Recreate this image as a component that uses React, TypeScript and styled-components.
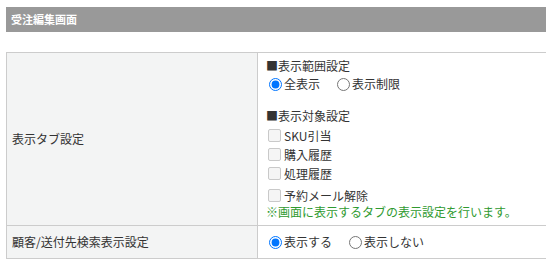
import styled, { createGlobalStyle } from "styled-components";

const GlobalStyle = createGlobalStyle`
  html, body {
    margin: 0;
    padding: 0;
    background: #fff;
    overflow: hidden;
  }
  body {
    font-family: "Noto Sans CJK JP", "Liberation Sans", sans-serif;
    color: #333;
  }
`;

const Page = styled.div`
  padding: 7px 0 0 6px;
`;

const TitleBar = styled.div`
  height: 25px;
  background: #999999;
  color: #fff;
  font-size: 11px;
  font-weight: bold;
  line-height: 25px;
  padding-left: 5px;
  margin-bottom: 20px;
`;

const Table = styled.table`
  border-collapse: collapse;
  width: 100%;
  font-size: 12px;
`;

const HeadCell = styled.th`
  width: 245px;
  background: #f3f4f4;
  border: 1px solid #cccccc;
  text-align: left;
  font-weight: normal;
  vertical-align: middle;
  padding: 0 0 0 5px;
  line-height: 18px;
`;

const DataCell = styled.td<{ $compact?: boolean }>`
  border: 1px solid #cccccc;
  border-right: none;
  vertical-align: middle;
  padding: ${({ $compact }) => ($compact ? "6px 8px 6px 8px" : "4px 8px 6px 8px")};
  height: ${({ $compact }) => ($compact ? "19px" : "auto")};
`;

const SectionTitle = styled.div<{ $gap?: number }>`
  line-height: 17px;
  margin-top: ${({ $gap }) => $gap ?? 0}px;
`;

const RadioRow = styled.div`
  display: flex;
  align-items: center;
  height: 20px;
`;

const RadioLabel = styled.label`
  display: inline-flex;
  align-items: center;
  margin-right: 14px;
  line-height: 18px;
`;

const Radio = styled.input.attrs({ type: "radio" })`
  width: 13px;
  height: 13px;
  margin: 0 2px 0 3px;
  accent-color: #0075ff;
`;

const CheckList = styled.div`
  margin-top: 2px;
`;

const CheckRow = styled.label<{ $extra?: number }>`
  display: flex;
  align-items: center;
  height: 19px;
  margin-top: ${({ $extra }) => $extra ?? 0}px;
`;

const Check = styled.input.attrs({ type: "checkbox" })`
  appearance: none;
  width: 13px;
  height: 13px;
  margin: 0 3px 0 2px;
  border: 1px solid #c9c9c9;
  border-radius: 2px;
  background: #f5f5f5;
  box-sizing: border-box;
`;

const Note = styled.div`
  color: #2f9a2f;
  line-height: 14px;
`;

const targets = ["SKU引当", "購入履歴", "処理履歴", "予約メール解除"];

export default function App() {
  return (
    <>
      <GlobalStyle />
      <Page>
        <TitleBar>受注編集画面</TitleBar>
        <Table>
          <tbody>
            <tr>
              <HeadCell>表示タブ設定</HeadCell>
              <DataCell>
                <SectionTitle>■表示範囲設定</SectionTitle>
                <RadioRow>
                  <RadioLabel>
                    <Radio name="range" defaultChecked />
                    全表示
                  </RadioLabel>
                  <RadioLabel>
                    <Radio name="range" />
                    表示制限
                  </RadioLabel>
                </RadioRow>
                <SectionTitle $gap={13}>■表示対象設定</SectionTitle>
                <CheckList>
                  {targets.map((t, i) => (
                    <CheckRow key={t} $extra={i === 3 ? 3 : 0}>
                      <Check disabled />
                      {t}
                    </CheckRow>
                  ))}
                </CheckList>
                <Note>※画面に表示するタブの表示設定を行います。</Note>
              </DataCell>
            </tr>
            <tr>
              <HeadCell>顧客/送付先検索表示設定</HeadCell>
              <DataCell $compact>
                <RadioRow>
                  <RadioLabel>
                    <Radio name="search" defaultChecked />
                    表示する
                  </RadioLabel>
                  <RadioLabel>
                    <Radio name="search" />
                    表示しない
                  </RadioLabel>
                </RadioRow>
              </DataCell>
            </tr>
          </tbody>
        </Table>
      </Page>
    </>
  );
}
